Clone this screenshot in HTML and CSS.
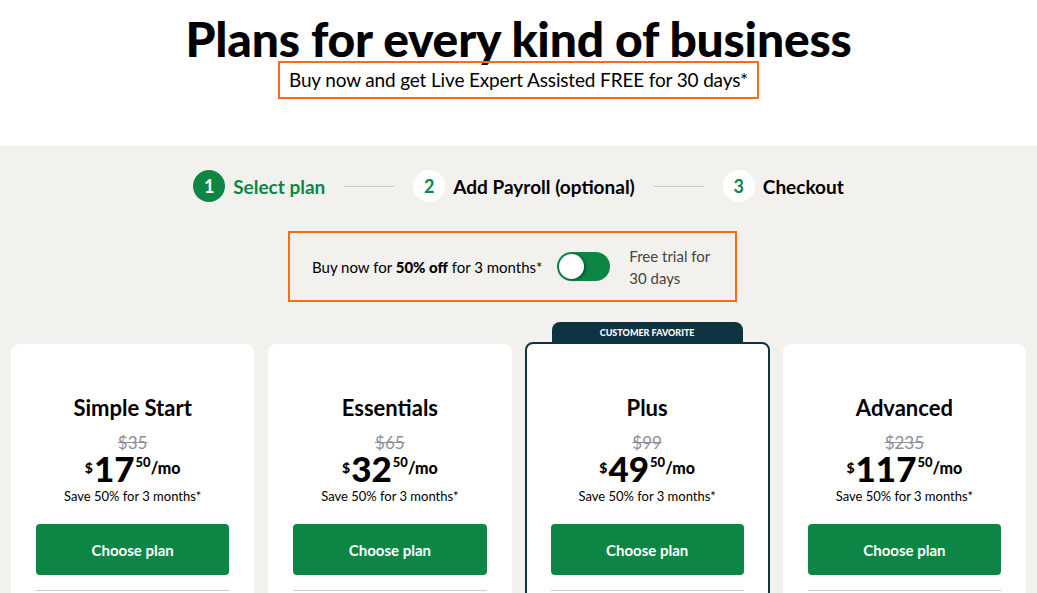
FILE: index.html
```html
<!doctype html>
<html lang="en">
<head>
    <meta charset="UTF-8">
    <meta name="viewport" content="width=device-width, initial-scale=1.0">
    <title>Plans for every kind of business</title>
    <link rel="stylesheet" href="styles.css">
</head>
<body>
    <header class="hero">
        <h1>Plans for every kind of business</h1>
        <p class="promo">Buy now and get Live Expert Assisted FREE for 30 days*</p>
    </header>

    <main class="pricing">
        <ol class="steps">
            <li class="step active"><span class="step-num">1</span>Select plan</li>
            <li class="step-line"></li>
            <li class="step"><span class="step-num">2</span>Add Payroll (optional)</li>
            <li class="step-line"></li>
            <li class="step"><span class="step-num">3</span>Checkout</li>
        </ol>

        <div class="offer">
            <span class="offer-text">Buy now for <b>50% off</b> for 3 months*</span>
            <span class="toggle"><span class="knob"></span></span>
            <span class="offer-alt">Free trial for<br>30 days</span>
        </div>

        <div class="cards">
            <div class="card">
                <h2>Simple Start</h2>
                <div class="old-price">$35</div>
                <div class="price"><span class="cur">$</span><span class="amt">17</span><span class="cents">50</span><span class="per">/mo</span></div>
                <p class="save">Save 50% for 3 months*</p>
                <button class="choose">Choose plan</button>
                <hr>
            </div>
            <div class="card">
                <h2>Essentials</h2>
                <div class="old-price">$65</div>
                <div class="price"><span class="cur">$</span><span class="amt">32</span><span class="cents">50</span><span class="per">/mo</span></div>
                <p class="save">Save 50% for 3 months*</p>
                <button class="choose">Choose plan</button>
                <hr>
            </div>
            <div class="card featured">
                <div class="badge">CUSTOMER FAVORITE</div>
                <h2>Plus</h2>
                <div class="old-price">$99</div>
                <div class="price"><span class="cur">$</span><span class="amt">49</span><span class="cents">50</span><span class="per">/mo</span></div>
                <p class="save">Save 50% for 3 months*</p>
                <button class="choose">Choose plan</button>
                <hr>
            </div>
            <div class="card">
                <h2>Advanced</h2>
                <div class="old-price">$235</div>
                <div class="price"><span class="cur">$</span><span class="amt">117</span><span class="cents">50</span><span class="per">/mo</span></div>
                <p class="save">Save 50% for 3 months*</p>
                <button class="choose">Choose plan</button>
                <hr>
            </div>
        </div>
    </main>
</body>
</html>
```

FILE: styles.css
```css
body {
    margin: 0;
    font-family: Lato, "Open Sans", Arial, sans-serif;
    color: #000;
    background: #f2f1ee;
    overflow: hidden;
}
.hero {
    background: #fff;
    height: 146px;
    display: flex;
    flex-direction: column;
    align-items: center;
    padding-top: 14px;
    box-sizing: border-box;
}
h1 {
    margin: 0;
    font-size: 48px;
    font-weight: 900;
    line-height: 50px;
    letter-spacing: -0.2px;
}
.promo {
    margin: -3px 0 0;
    padding: 0 9px;
    height: 34px;
    line-height: 34px;
    border: 2px solid #ff6a13;
    font-size: 19px;
    letter-spacing: -0.15px;
}
.pricing {
    display: flex;
    flex-direction: column;
    align-items: center;
}
.steps {
    list-style: none;
    margin: 24px 0 0;
    padding: 0;
    display: flex;
    align-items: center;
    font-size: 19px;
    font-weight: 700;
}
.step {
    display: flex;
    align-items: center;
    gap: 8px;
}
.step-num {
    width: 32px;
    height: 32px;
    border-radius: 50%;
    background: #fff;
    color: #0d8645;
    display: flex;
    align-items: center;
    justify-content: center;
    font-size: 18px;
}
.step.active {
    color: #0d8645;
}
.step.active .step-num {
    background: #0d8645;
    color: #fff;
}
.step-line {
    width: 50px;
    height: 1px;
    background: #c3ccc6;
    margin: 0 19px;
}
.offer {
    margin: 29px 12px 0 0;
    width: 449px;
    height: 71px;
    box-sizing: border-box;
    border: 2px solid #ff6a13;
    display: flex;
    align-items: center;
    padding: 0 22px;
    font-size: 15px;
}
.offer b {
    font-weight: 900;
}
.toggle {
    width: 53px;
    height: 29px;
    border-radius: 15px;
    background: #0d8645;
    margin: 0 19px 0 15px;
    position: relative;
    flex: none;
}
.knob {
    position: absolute;
    left: 2px;
    top: 2px;
    width: 25px;
    height: 25px;
    border-radius: 50%;
    background: #fff;
    box-shadow: 2px 1px 3px rgba(0, 0, 0, 0.35);
}
.offer-alt {
    color: #444;
    line-height: 22px;
}
.cards {
    width: 100%;
    box-sizing: border-box;
    padding: 0 11px;
    margin-top: 42px;
    display: grid;
    grid-template-columns: repeat(4, 1fr);
    gap: 14px;
}
.card {
    background: #fff;
    border-radius: 8px;
    padding: 50px 25px 0;
    height: 260px;
    text-align: center;
    position: relative;
}
.card.featured {
    border: 2px solid #0e3441;
    margin: -2px -1px 0;
    padding: 50px 24px 0;
}
.badge {
    position: absolute;
    top: -22px;
    left: 25px;
    right: 25px;
    height: 20px;
    line-height: 21px;
    background: #0e3441;
    color: #fff;
    border-radius: 8px 8px 0 0;
    font-size: 9px;
    font-weight: 900;
}
h2 {
    margin: 0;
    font-size: 22px;
    font-weight: 700;
    line-height: 28px;
}
.old-price {
    margin-top: 11px;
    font-size: 17px;
    color: #8d9096;
    text-decoration: line-through;
    line-height: 20px;
}
.price {
    display: flex;
    justify-content: center;
    align-items: flex-start;
    height: 30px;
    font-weight: 900;
}
.cur {
    font-size: 14px;
    line-height: 14px;
    margin-top: 8px;
    margin-right: 1px;
}
.amt {
    font-size: 35px;
    line-height: 30px;
}
.cents {
    font-size: 13px;
    line-height: 13px;
    margin-top: 3px;
    margin-left: 1px;
}
.per {
    font-size: 16px;
    line-height: 16px;
    margin-top: 7px;
}
.save {
    margin: 5px 0 0;
    font-size: 13px;
    line-height: 16px;
}
.choose {
    margin-top: 20px;
    width: 100%;
    height: 51px;
    border: 0;
    border-radius: 4px;
    background: #0d8645;
    color: #fff;
    font-family: inherit;
    font-size: 15px;
    font-weight: 700;
}
hr {
    margin: 15px 0 0;
    border: 0;
    border-top: 1px solid #ccc;
}
```
